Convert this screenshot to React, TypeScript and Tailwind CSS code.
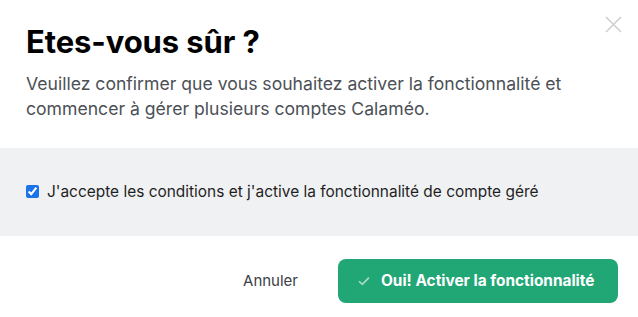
import React, { useState } from "react";

const ConfirmModal = () => {
  const [accepted, setAccepted] = useState(true);

  return (
    <div className="relative w-[638px] h-[317px] bg-white font-['Inter',sans-serif]">
      <button className="absolute right-[16px] top-[16px] w-[17px] h-[17px] text-[#cfcfcf]">
        <svg viewBox="0 0 17 17" className="w-full h-full" fill="none" stroke="currentColor" strokeWidth="1.6">
          <path d="M1 1L16 16M16 1L1 16" />
        </svg>
      </button>

      {/* Header */}
      <div className="px-[26px] pt-[22px] pb-[27px]">
        <h2 className="text-[31px] leading-[40px] font-bold text-black tracking-[-0.1px]">
          Etes-vous sûr ?
        </h2>
        <p className="mt-[9px] text-[17.6px] leading-[25px] text-[#4b5056]">
          Veuillez confirmer que vous souhaitez activer la fonctionnalité et
          <br />
          commencer à gérer plusieurs comptes Calaméo.
        </p>
      </div>

      {/* Conditions */}
      <div className="h-[88px] bg-[#f0f1f3] px-[26px] flex items-center">
        <label className="flex items-center gap-[8px] text-[15.45px] text-[#1f1f1f]">
          <input
            type="checkbox"
            checked={accepted}
            onChange={(e) => setAccepted(e.target.checked)}
            className="w-[13px] h-[13px] accent-[#1a73e8]"
          />
          J'accepte les conditions et j'active la fonctionnalité de compte géré
        </label>
      </div>

      {/* Footer */}
      <div className="flex items-center justify-end gap-[24px] pr-[20px] pt-[23px]">
        <button className="px-[16px] text-[15px] text-[#3a3f45]">Annuler</button>
        <button className="h-[44px] w-[280px] rounded-[8px] bg-[#21a675] flex items-center pl-[20px] gap-[11px] text-white text-[15.4px] font-bold">
          <svg viewBox="0 0 12 10" className="w-[12px] h-[10px]" fill="none" stroke="#a9dcc6" strokeWidth="1.6">
            <path d="M1 5.2L4.3 8.4L11 1.6" />
          </svg>
          Oui! Activer la fonctionnalité
        </button>
      </div>
    </div>
  );
};

export default function App() {
  return <ConfirmModal />;
}
